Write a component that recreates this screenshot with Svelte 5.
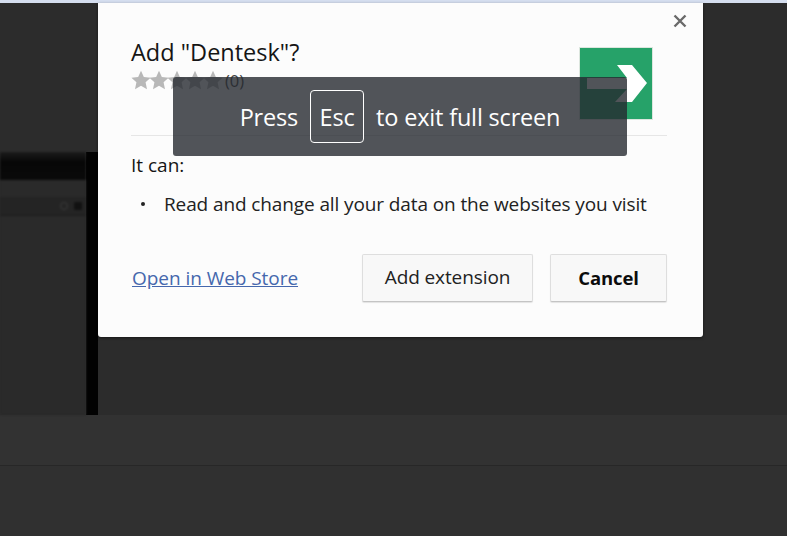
<script lang="ts">
  const stars = [0, 1, 2, 3, 4]
</script>

<div class="page">
  <div class="stripe"></div>
  <div class="workspace">
    <div class="backdrop-window">
      <div class="window-shade"></div>
      <div class="window-head"></div>
      <div class="window-bar">
        <span class="window-dot"></span>
        <span class="window-dot dark"></span>
      </div>
    </div>
    <div class="backdrop-edge"></div>
  </div>
  <div class="panel">
    <div class="panel-row"></div>
    <div class="panel-row last"></div>
  </div>

  <div class="dialog">
    <button class="close" aria-label="Close">
      <svg width="14" height="14" viewBox="0 0 14 14">
        <path d="M1.5 1.5 12.5 12.5M12.5 1.5 1.5 12.5" stroke="#6a6a6a" stroke-width="2.4" fill="none" />
      </svg>
    </button>
    <div class="head">
      <div class="head-text">
        <h1>Add "Dentesk"?</h1>
        <div class="rating">
          {#each stars as s}
            <svg class="star" width="20" height="20" viewBox="0 0 24 24">
              <path d="M12 1 15.4 8.3 23.5 9.2 17.5 14.8 19.2 23 12 18.9 4.8 23 6.5 14.8 .5 9.2 8.6 8.3Z" fill="#b8b8b8" />
            </svg>
          {/each}
          <span class="count">(0)</span>
        </div>
      </div>
      <div class="logo">
        <svg width="72" height="71" viewBox="580 48 72 71">
          <rect x="580" y="48" width="72" height="71" fill="#26a269" />
          <path d="M617 65H632L647 83 632 102H615L627 89H587V78H627Z" fill="#fff" />
        </svg>
      </div>
    </div>
    <hr />
    <div class="can">It can:</div>
    <ul>
      <li>Read and change all your data on the websites you visit</li>
    </ul>
    <div class="foot">
      <a href="#store">Open in Web Store</a>
      <div class="actions">
        <button class="btn add">Add extension</button>
        <button class="btn cancel">Cancel</button>
      </div>
    </div>
  </div>

  <div class="toast">
    <span>Press</span>
    <kbd>Esc</kbd>
    <span>to exit full screen</span>
  </div>
</div>

<style>
  :global(body) {
    margin: 0;
    background: #2b2b2b;
  }

  .page {
    position: relative;
    width: 787px;
    height: 536px;
    overflow: hidden;
    display: flex;
    flex-direction: column;
    font-family: "Open Sans", "Noto Sans", sans-serif;
    background: #2b2b2b;
  }

  .stripe {
    height: 3px;
    background: #d5deef;
  }

  .workspace {
    height: 412px;
    display: flex;
    align-items: flex-end;
    background: #2c2c2c;
  }

  .backdrop-window {
    width: 86px;
    height: 263px;
    background: #2a2a2a;
    box-sizing: border-box;
    filter: blur(1px);
  }

  .window-shade {
    height: 28px;
    background: linear-gradient(#1c1c1c, #070707 35%, #0a0a0a);
  }

  .window-head {
    height: 17px;
    background: #2a2a2a;
  }

  .window-bar {
    height: 18px;
    background: #242424;
    border-bottom: 1px solid #1c1c1c;
    display: flex;
    justify-content: flex-end;
    align-items: center;
    gap: 6px;
    padding-right: 4px;
  }

  .window-dot {
    width: 6px;
    height: 6px;
    border-radius: 50%;
    border: 1px solid #3c3c3c;
  }

  .window-dot.dark {
    background: #111;
    border-color: #111;
    border-radius: 1px;
  }

  .backdrop-edge {
    width: 12px;
    height: 263px;
    background: #020202;
  }

  .panel {
    flex: 1;
    display: flex;
    flex-direction: column;
    background: #323232;
  }

  .panel-row {
    height: 50px;
    border-bottom: 1px solid #272727;
  }

  .panel-row.last {
    flex: 1;
    border-bottom: 0;
    background: #303030;
  }

  .dialog {
    position: absolute;
    left: 98px;
    top: 3px;
    width: 605px;
    height: 334px;
    box-sizing: border-box;
    padding: 0 36px 0 33px;
    background: #fcfcfc;
    border-radius: 0 0 3px 3px;
    box-shadow: 0 1px 3px rgba(0, 0, 0, 0.5);
    color: #111;
  }

  .close {
    position: absolute;
    right: 16px;
    top: 11px;
    width: 14px;
    height: 14px;
    padding: 0;
    border: 0;
    background: none;
    display: flex;
  }

  .head {
    display: flex;
    justify-content: space-between;
    height: 132px;
  }

  .head-text {
    padding-top: 33px;
  }

  h1 {
    margin: 0;
    font-size: 23.5px;
    line-height: 32px;
    font-weight: 400;
    color: #151515;
  }

  .rating {
    display: flex;
    align-items: center;
    height: 20px;
    margin-top: 2px;
  }

  .star {
    margin-right: -2px;
  }

  .count {
    margin-left: 4px;
    font-size: 16.5px;
    color: #444;
  }

  .logo {
    margin-top: 45px;
    margin-right: 15px;
    width: 72px;
    height: 71px;
    outline: 1px solid #dce6de;
  }

  .logo svg {
    display: block;
  }

  hr {
    margin: 0;
    border: 0;
    height: 1px;
    background: #e6e6e6;
  }

  .can {
    margin-top: 16px;
    font-size: 19px;
    line-height: 26px;
    color: #151515;
  }

  ul {
    margin: 13px 0 0;
    padding: 0;
    list-style: none;
    font-size: 19px;
    line-height: 26px;
    letter-spacing: -0.11px;
    color: #222;
  }

  li {
    display: flex;
    align-items: center;
  }

  li::before {
    content: "";
    flex: none;
    width: 4px;
    height: 4px;
    margin: 0 19px 0 10px;
    border-radius: 50%;
    background: #222;
  }

  .foot {
    display: flex;
    justify-content: space-between;
    align-items: center;
    margin-top: 37px;
  }

  a {
    margin-left: 1px;
    font-size: 19px;
    letter-spacing: -0.05px;
    color: #4567ad;
  }

  .actions {
    display: flex;
    gap: 17px;
  }

  .btn {
    height: 48px;
    box-sizing: border-box;
    border: 1px solid #dedede;
    border-bottom-color: #c4c4c4;
    border-radius: 2px;
    background: #f8f8f8;
    box-shadow: 0 1px 1px rgba(0, 0, 0, 0.1);
    font-family: inherit;
    font-size: 19px;
    letter-spacing: -0.1px;
    color: #222;
    padding: 0 0 2px;
  }

  .add {
    width: 171px;
  }

  .cancel {
    width: 117px;
    font-size: 18.5px;
    font-weight: 700;
    color: #0c0c0c;
  }

  .toast {
    position: absolute;
    left: 173px;
    top: 77px;
    width: 454px;
    height: 79px;
    display: flex;
    align-items: center;
    justify-content: center;
    gap: 12px;
    border-radius: 3px;
    background: rgba(38, 41, 47, 0.8);
    color: #fff;
    font-size: 23.5px;
    letter-spacing: -0.18px;
  }

  kbd {
    width: 54px;
    height: 53px;
    box-sizing: border-box;
    display: flex;
    align-items: center;
    justify-content: center;
    border: 1.5px solid #fff;
    border-radius: 4px;
    font-family: inherit;
    font-size: 23.5px;
  }
</style>
